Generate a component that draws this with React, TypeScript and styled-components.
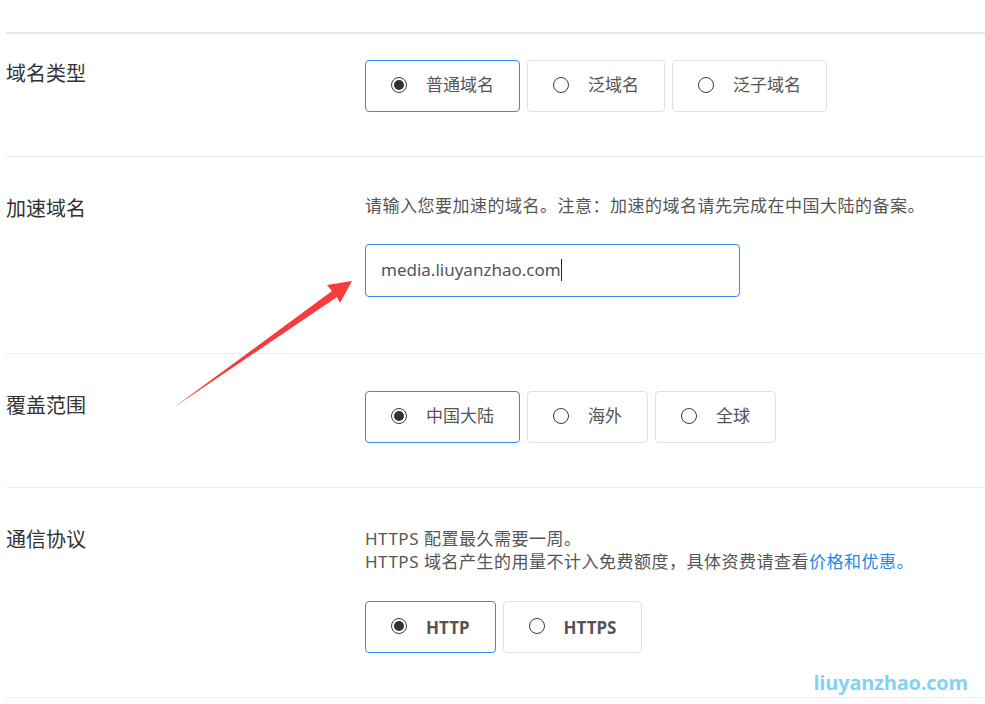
import styled, { createGlobalStyle } from "styled-components";

const GlobalStyle = createGlobalStyle`
  html, body {
    margin: 0;
    padding: 0;
    background: #fff;
  }
  body {
    font-family: "Noto Sans", "Noto Sans CJK SC", sans-serif;
    color: #333;
  }
`;

type Option = { label: string; checked?: boolean };

const RadioGroup = ({ options, bold }: { options: Option[]; bold?: boolean }) => (
  <Group>
    {options.map((o) => (
      <RadioButton key={o.label} $checked={o.checked} $bold={bold}>
        <Dot $checked={o.checked} $bold={bold} />
        {o.label}
      </RadioButton>
    ))}
  </Group>
);

const App = () => {
  return (
    <Page>
      <GlobalStyle />
      <Form>
        <Row $top={26} $bottom={44}>
          <Label>域名类型</Label>
          <Field>
            <RadioGroup
              options={[
                { label: "普通域名", checked: true },
                { label: "泛域名" },
                { label: "泛子域名" },
              ]}
            />
          </Field>
        </Row>

        <Row $top={38} $bottom={56}>
          <Label>加速域名</Label>
          <Field>
            <Hint $mt={-1} $mb={27}>
              请输入您要加速的域名。注意：加速的域名请先完成在中国大陆的备案。
            </Hint>
            <Input>
              media.liuyanzhao.com
              <Caret />
            </Input>
          </Field>
        </Row>

        <Row $top={37} $bottom={44}>
          <Label $offset={1}>覆盖范围</Label>
          <Field>
            <RadioGroup
              options={[
                { label: "中国大陆", checked: true },
                { label: "海外" },
                { label: "全球" },
              ]}
            />
          </Field>
        </Row>

        <Row $top={38} $bottom={44}>
          <Label>通信协议</Label>
          <Field>
            <Hint $mt={1} $mb={28}>
              HTTPS 配置最久需要一周。
              <br />
              HTTPS 域名产生的用量不计入免费额度，具体资费请查看<Link>价格和优惠。</Link>
            </Hint>
            <RadioGroup bold options={[{ label: "HTTP", checked: true }, { label: "HTTPS" }]} />
          </Field>
        </Row>
      </Form>

      <Arrow width="985" height="704" viewBox="0 0 985 704">
        <path d="M173 408 L332 291 L327 285 L352 281 L340 303 L337 297 Z" fill="#f53b3b" />
      </Arrow>

      <Watermark>liuyanzhao.com</Watermark>
    </Page>
  );
};

const Page = styled.div`
  position: relative;
  width: 985px;
  height: 704px;
  padding: 32px 0 0 6px;
  box-sizing: border-box;
  overflow: hidden;
`;

const Form = styled.div`
  border-top: 2px solid #e4e7ec;
`;

const Row = styled.div<{ $top: number; $bottom: number }>`
  display: grid;
  grid-template-columns: 359px 1fr;
  padding: ${(p) => p.$top}px 0 ${(p) => p.$bottom}px;
  border-bottom: 1px solid #ebebeb;
`;

const Label = styled.div<{ $offset?: number }>`
  font-family: "Noto Sans CJK SC", sans-serif;
  font-size: 20px;
  line-height: 26px;
  color: #333;
  margin-top: ${(p) => p.$offset ?? 0}px;
`;

const Field = styled.div`
  display: flex;
  flex-direction: column;
  align-items: flex-start;
`;

const Group = styled.div`
  display: flex;
  gap: 7px;
`;

const RadioButton = styled.div<{ $checked?: boolean; $bold?: boolean }>`
  display: flex;
  align-items: center;
  gap: 19px;
  height: 52px;
  box-sizing: border-box;
  padding: 0 25px ${(p) => (p.$bold ? 0 : 6)}px 25px;
  border: 1px solid ${(p) => (p.$checked ? "#2e8ded" : "#dfe1e6")};
  border-radius: 4px;
  font-family: "Noto Sans", "Noto Sans CJK SC", sans-serif;
  font-size: 17px;
  font-weight: ${(p) => (p.$bold ? 700 : 400)};
  color: #555;
`;

const Dot = styled.span<{ $checked?: boolean; $bold?: boolean }>`
  position: relative;
  flex: none;
  width: 16px;
  height: 16px;
  box-sizing: border-box;
  border: 1.5px solid #3a3a3a;
  border-radius: 50%;
  margin-top: ${(p) => (p.$bold ? -3 : 3)}px;

  &::after {
    content: "";
    display: ${(p) => (p.$checked ? "block" : "none")};
    position: absolute;
    inset: 2px;
    border-radius: 50%;
    background: #333;
  }
`;

const Hint = styled.div<{ $mt?: number; $mb?: number }>`
  font-family: "Noto Sans", "Noto Sans CJK SC", sans-serif;
  font-size: 17px;
  line-height: 23px;
  letter-spacing: 0.5px;
  color: #555;
  margin-top: ${(p) => p.$mt ?? 0}px;
  margin-bottom: ${(p) => p.$mb ?? 26}px;
`;

const Link = styled.span`
  color: #1e8ae8;
`;

const Input = styled.div`
  display: flex;
  align-items: center;
  width: 375px;
  height: 53px;
  box-sizing: border-box;
  padding: 0 15px 2px;
  border: 1px solid #2e8ded;
  border-radius: 4px;
  font-family: "Noto Sans", sans-serif;
  font-size: 17px;
  color: #555;
`;

const Caret = styled.span`
  display: inline-block;
  width: 1px;
  height: 22px;
  background: #222;
`;

const Arrow = styled.svg`
  position: absolute;
  left: 0;
  top: 0;
  pointer-events: none;
`;

const Watermark = styled.div`
  position: absolute;
  right: 17px;
  top: 669px;
  font-family: "Open Sans", "Noto Sans", sans-serif;
  font-size: 20px;
  font-weight: 700;
  letter-spacing: -0.2px;
  color: #82d2f5;
`;

export default App;
